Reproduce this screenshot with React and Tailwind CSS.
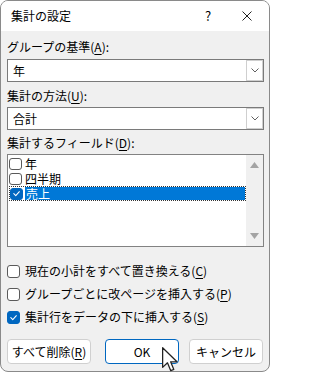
import React from 'react';

const font = { fontFamily: '"Noto Sans CJK JP", "Noto Sans", sans-serif' };

function Check({ checked, size = 'w-[13px] h-[13px]' }) {
    return (
        <span
            className={`${size} shrink-0 rounded-[3px] border flex items-center justify-center ${
                checked ? 'bg-[#0067c0] border-[#0067c0]' : 'bg-white border-[#5a5a5a]'
            }`}
        >
            {checked && (
                <svg className="w-[9px] h-[9px]" viewBox="0 0 10 10" fill="none" stroke="white" strokeWidth="1.2">
                    <path d="M2 5.2 L4.2 7.3 L8.2 3" strokeLinecap="round" strokeLinejoin="round" />
                </svg>
            )}
        </span>
    );
}

function Combo({ value }) {
    return (
        <div className="w-[257px] h-[23px] bg-white border border-[#7a7a7a] flex items-center">
            <span className="flex-1 pl-[5px] text-[12px] leading-[16px] text-black">{value}</span>
            <span className="w-[17px] h-[21px] bg-white border border-[#cfcfcf] flex items-center justify-center">
                <svg className="w-[8px] h-[5px]" viewBox="0 0 8 5" fill="none" stroke="#606060" strokeWidth="1">
                    <path d="M0.5 0.5 L4 4 L7.5 0.5" />
                </svg>
            </span>
        </div>
    );
}

function Btn({ children, className = '', primary }) {
    return (
        <div
            className={`h-[25px] bg-white rounded-[4px] flex items-center justify-center text-[12px] text-black ${
                primary ? 'border-[1.5px] border-[#0067c0]' : 'border border-[#d0d0d0]'
            } ${className}`}
        >
            {children}
        </div>
    );
}

export default function App() {
    return (
        <div className="w-[271px] h-[374px] bg-white relative overflow-hidden" style={font}>
            <div className="w-[270px] h-[372px] border border-[#8a8a8a] rounded-[8px] overflow-hidden flex flex-col bg-[#f0f0f0]">
                {/* Title bar */}
                <div className="h-[30px] bg-white flex items-center shrink-0">
                    <span className="pl-[10px] text-[12px] text-black flex-1">集計の設定</span>
                    <span className="w-[20px] text-center text-[13px] text-black mr-[24px]">?</span>
                    <svg className="w-[10px] h-[10px] mr-[17px]" viewBox="0 0 10 10" stroke="#222" strokeWidth="1">
                        <path d="M0.5 0.5 L9.5 9.5 M9.5 0.5 L0.5 9.5" />
                    </svg>
                </div>

                {/* Body */}
                <div className="flex flex-col pl-[6px] text-[12px] leading-[16px] text-black">
                    <div className="mt-[8px] h-[16px]">
                        グループの基準(<u className="underline-offset-2">A</u>):
                    </div>
                    <div className="mt-[4px]">
                        <Combo value="年" />
                    </div>
                    <div className="mt-[6px] h-[16px]">
                        集計の方法(<u className="underline-offset-2">U</u>):
                    </div>
                    <div className="mt-[3px]">
                        <Combo value="合計" />
                    </div>
                    <div className="mt-[5px] h-[16px]">
                        集計するフィールド(<u className="underline-offset-2">D</u>):
                    </div>

                    {/* List box */}
                    <div className="mt-[3px] w-[257px] h-[93px] bg-white border border-[#828282] flex">
                        <div className="flex-1 pt-[1px] pl-[1px] flex flex-col leading-[14px]">
                            <div className="h-[15px] flex items-center">
                                <Check size="w-[13px] h-[12px]" />
                                <span className="ml-[3px]">年</span>
                            </div>
                            <div className="h-[15px] flex items-center">
                                <Check size="w-[13px] h-[12px]" />
                                <span className="ml-[3px]">四半期</span>
                            </div>
                            <div className="h-[15px] flex items-center border border-dotted border-[#333]">
                                <Check checked size="w-[13px] h-[12px]" />
                                <span className="ml-[2px] flex-1 h-full bg-[#0078d7] text-white pl-[1px] flex items-center">
                                    売上
                                </span>
                            </div>
                        </div>
                        <div className="w-[17px] bg-[#f0f0f0] flex flex-col items-center justify-between py-[7px]">
                            <svg className="w-[9px] h-[6px]" viewBox="0 0 9 6" fill="#a3a3a3">
                                <path d="M4.5 0 L9 6 L0 6 Z" />
                            </svg>
                            <svg className="w-[9px] h-[6px]" viewBox="0 0 9 6" fill="#a3a3a3">
                                <path d="M0 0 L9 0 L4.5 6 Z" />
                            </svg>
                        </div>
                    </div>

                    {/* Options */}
                    <div className="mt-[16px] h-[16px] flex items-center">
                        <Check />
                        <span className="ml-[5px]">
                            現在の小計をすべて置き換える(<u className="underline-offset-2">C</u>)
                        </span>
                    </div>
                    <div className="mt-[7px] h-[16px] flex items-center">
                        <Check />
                        <span className="ml-[5px]">
                            グループごとに改ページを挿入する(<u className="underline-offset-2">P</u>)
                        </span>
                    </div>
                    <div className="mt-[7px] h-[16px] flex items-center">
                        <Check checked />
                        <span className="ml-[5px]">
                            集計行をデータの下に挿入する(<u className="underline-offset-2">S</u>)
                        </span>
                    </div>

                    {/* Buttons */}
                    <div className="mt-[14px] flex">
                        <Btn className="w-[84px]">
                            すべて削除(<u className="underline-offset-2">R</u>)
                        </Btn>
                        <Btn primary className="w-[74px] ml-[14px]">OK</Btn>
                        <Btn className="w-[74px] ml-[10px]">キャンセル</Btn>
                    </div>
                </div>
            </div>

            {/* Mouse cursor */}
            <svg className="absolute left-[162px] top-[347px] w-[16px] h-[25px]" viewBox="0 0 12.6 19.6">
                <path
                    d="M0.5 0.5 L0.5 16 L4.3 12.4 L6.9 18.6 L9.3 17.6 L6.8 11.6 L11.8 11.6 Z"
                    fill="white"
                    stroke="#222"
                    strokeWidth="1"
                    strokeLinejoin="round"
                />
            </svg>
        </div>
    );
}
